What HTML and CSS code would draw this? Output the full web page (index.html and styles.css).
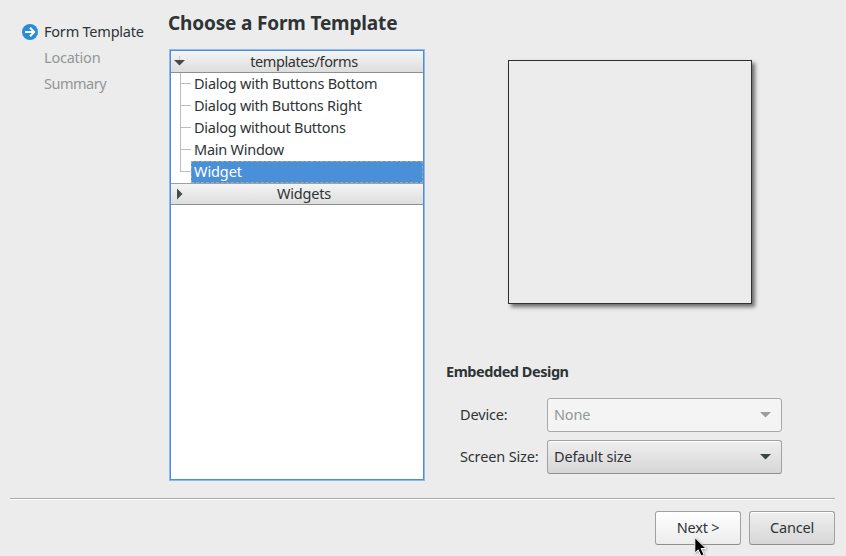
FILE: index.html
```html
<!DOCTYPE html>
<html lang="en">
<head>
<meta charset="utf-8">
<title>Choose a Form Template</title>
<link rel="stylesheet" href="styles.css">
</head>
<body>
<div class="wizard">
  <main class="content">
    <nav class="steps">
      <div class="step current"><svg class="step-icon" width="16" height="16" viewBox="0 0 16 16"><circle cx="8" cy="8" r="8" fill="#288cd8"/><path d="M3 8h9M8 3.8L12.2 8L8 12.2" fill="none" stroke="#fff" stroke-width="2"/></svg><span class="t-step1">Form Template</span></div>
      <div class="step"><span class="t-step2">Location</span></div>
      <div class="step"><span class="t-step3">Summary</span></div>
    </nav>
    <section class="templates">
      <h1><span class="t-title">Choose a Form Template</span></h1>
      <div class="tree">
        <div class="group"><svg class="arrow" width="11" height="14" viewBox="0 0 11 14"><path d="M5.5 1v4" stroke="#c4c4c4"/><path d="M0 5h11L5.5 10.500z" fill="#464c4d"/></svg><span class="t-group">templates/forms</span></div>
        <div class="row"><span class="cell t-r1">Dialog with Buttons Bottom</span></div>
        <div class="row"><span class="cell t-r2">Dialog with Buttons Right</span></div>
        <div class="row"><span class="cell t-r3">Dialog without Buttons</span></div>
        <div class="row"><span class="cell t-r4">Main Window</span></div>
        <div class="row last"><span class="cell selected">Widget</span></div>
        <div class="group second"><svg class="arrow" width="11" height="14" viewBox="0 0 11 14"><path d="M3 1.500v11L8.500 7z" fill="#464c4d"/></svg><span class="t-widgets">Widgets</span></div>
      </div>
    </section>
    <section class="details">
      <div class="preview"></div>
      <h2><span class="t-embedded">Embedded Design</span></h2>
      <div class="form">
        <label class="t-device">Device:</label>
        <div class="combo disabled"><span class="t-none">None</span><svg width="11" height="6" viewBox="0 0 11 6"><path d="M0 0h11L5.5 5.500z" fill="#9b9d9d"/></svg></div>
        <label class="t-screen">Screen Size:</label>
        <div class="combo"><span class="t-default">Default size</span><svg width="11" height="6" viewBox="0 0 11 6"><path d="M0 0h11L5.5 5.500z" fill="#3c4344"/></svg></div>
      </div>
    </section>
  </main>
  <footer class="buttons">
    <div class="button next"><span class="t-next">Next &gt;</span></div>
    <div class="button"><span class="t-cancel">Cancel</span></div>
  </footer>
</div>
<svg class="pointer" width="16" height="22" viewBox="0 0 16 22"><path d="M1.800 1.500V17L5.200 13.800L8 20L11 18.700L8.200 12.500H13z" fill="#000" stroke="#fff" stroke-width="1"/></svg>
</body>
</html>
```

FILE: styles.css
```css
* { box-sizing: border-box; }
body {
  margin: 0;
  background: #ececec;
  color: #2e3436;
  font: 14.5px/22px "Noto Sans", "Open Sans", sans-serif;
  letter-spacing: -.22px;
  white-space: nowrap;
  overflow: hidden;
}
.wizard { width: 846px; height: 556px; padding: 0 11px 0 10px; }
.content { display: flex; height: 498px; }
.steps { width: 159px; padding: 19px 0 0 12px; }
.step { height: 26px; line-height: 24px; padding-left: 22px; color: #939696; }
.step.current { display: flex; align-items: center; gap: 6px; padding-left: 0; color: #2e3436; }
.step.current span { padding-bottom: 2px; }
.step-icon { display: block; }
.t-step3 { letter-spacing: -.5px; }
.templates { width: 256px; }
h1 { margin: 0; height: 49px; padding-top: 9px; font-size: 19px; line-height: 28px; font-weight: 700; text-indent: -1px; letter-spacing: -.16px; }
.tree {
  height: 432px;
  border: 1px solid #91b9e5;
  outline: 1px solid #4a90d9;
  outline-offset: -2px;
  padding: 1px;
  background: #fff;
}
.group {
  display: flex;
  align-items: center;
  height: 22px;
  padding-left: 3px;
  border-bottom: 1px solid #8f9191;
  background: linear-gradient(#f4f4f4, #dedede);
}
.group.second { border-top: 1px solid #a1a1a1; }
.group span { flex: 1; text-align: center; padding-bottom: 2px; }
.t-group { letter-spacing: -.42px; }
.row { display: grid; grid-template-columns: 9px 11px 1fr; height: 22px; line-height: 20px; }
.row::before {
  content: "";
  grid-column: 2;
  border-left: 1px solid #bdbdbd;
  background: linear-gradient(#bdbdbd, #bdbdbd) 0 10px / 10px 1px no-repeat;
}
.row.last::before { height: 11px; }
.cell { padding-left: 3px; }
.t-r2, .t-r3, .t-r4 { letter-spacing: -.25px; }
.selected { background: #4a90d9; color: #fff; line-height: 18px; padding-left: 2px; border: 1px dashed #9ca9ad; letter-spacing: -.1px; }
.details { width: 400px; padding: 60px 0 0 21px; }
.preview {
  width: 244px;
  height: 244px;
  margin-left: 62px;
  border: 1px solid #2e3032;
  box-shadow: 3px 3px 4px rgba(0, 0, 0, .55);
}
h2 { margin: 56px 0 16px; font-size: 14.500px; line-height: 22px; font-weight: 700; letter-spacing: -.46px; }
.form { display: grid; grid-template-columns: 87px 235px; row-gap: 8px; padding-left: 14px; align-items: center; letter-spacing: -.15px; }
.form label, .combo span { padding-bottom: 2px; }
.combo {
  display: flex;
  align-items: center;
  justify-content: space-between;
  height: 34px;
  padding: 0 10px 0 6px;
  border: 1px solid #a1a1a1;
  border-bottom-color: #8f8f8f;
  border-radius: 3px;
  background: linear-gradient(#efefef, #d6d6d6);
  box-shadow: inset 0 1px #fff;
}
.combo.disabled { background: #f4f4f4; border-color: #a8a8a8; color: #939696; box-shadow: none; }
.buttons { display: flex; justify-content: flex-end; gap: 8px; border-top: 1px solid #aaa; box-shadow: inset 0 1px #fff; padding-top: 12px; }
.button {
  width: 86px;
  height: 34px;
  border: 1px solid #a1a1a1;
  border-bottom-color: #8f8f8f;
  border-radius: 3px;
  background: linear-gradient(#efefef, #d6d6d6);
  box-shadow: inset 0 1px #fff;
  text-align: center;
  line-height: 30px;
}
.button.next { background: linear-gradient(#fff, #ececec); }
.pointer { position: absolute; left: 693px; top: 536px; filter: drop-shadow(1px 1px 1px rgba(0, 0, 0, .3)); }
```
